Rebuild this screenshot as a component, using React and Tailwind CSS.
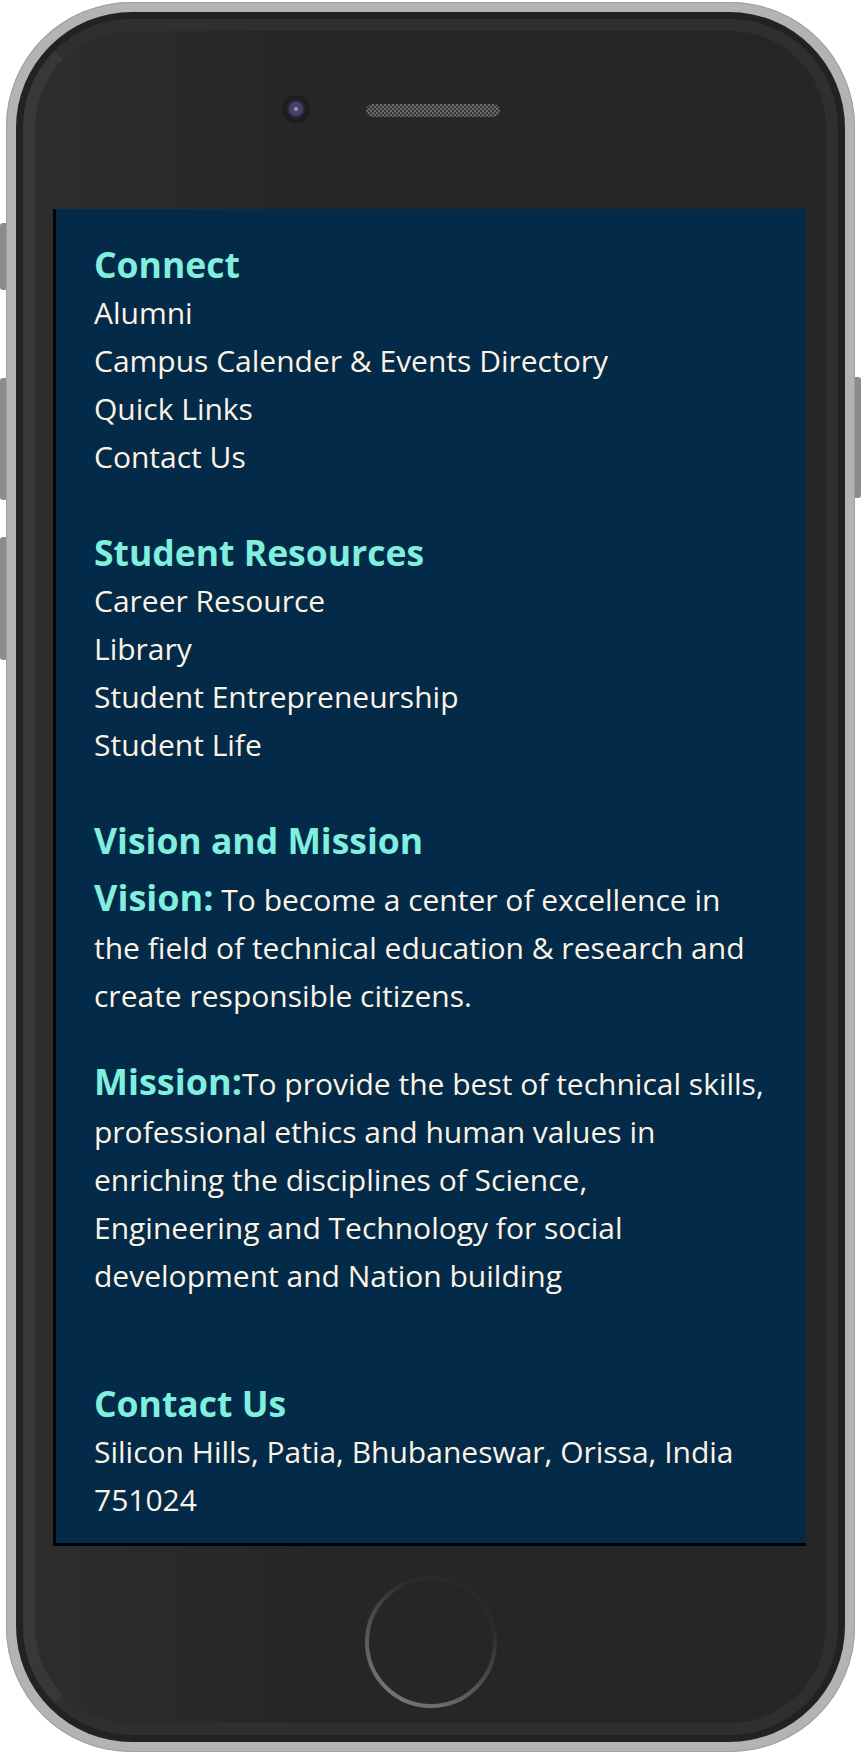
import { useId } from 'react'

const connectLinks = ['Alumni', 'Campus Calender & Events Directory', 'Quick Links', 'Contact Us']
const studentLinks = ['Career Resource', 'Library', 'Student Entrepreneurship', 'Student Life']

function LinkSection({ title, links, className = '' }) {
  return (
    <div className={className}>
      <h3 className="text-[35.5px] leading-[50px] font-bold text-[#81efde]">{title}</h3>
      <ul>
        {links.map((l) => (
          <li key={l} className="leading-[48px]">{l}</li>
        ))}
      </ul>
    </div>
  )
}

function HomeButton() {
  const id = useId()
  return (
    <svg width="136" height="136" viewBox="0 0 136 136">
      <defs>
        <linearGradient id={id} x1="0.95" y1="0" x2="0.4" y2="1">
          <stop offset="0" stopColor="#262626" />
          <stop offset="0.3" stopColor="#2c2c2c" />
          <stop offset="0.6" stopColor="#4a4a4a" />
          <stop offset="1" stopColor="#727272" />
        </linearGradient>
      </defs>
      <circle cx="68" cy="68" r="64" fill="none" stroke={`url(#${id})`} strokeWidth="4" />
    </svg>
  )
}

export default function App() {
  return (
    <div className="relative w-[862px] h-[1754px] bg-white font-['Open_Sans',sans-serif]">
      {/* side buttons */}
      <div className="absolute left-0 top-[223px] w-[7px] h-[67px] rounded-l-[3px] bg-[#8b8b90]" />
      <div className="absolute left-0 top-[378px] w-[7px] h-[122px] rounded-l-[3px] bg-[#8b8b90]" />
      <div className="absolute left-0 top-[537px] w-[7px] h-[123px] rounded-l-[3px] bg-[#8b8b90]" />
      <div className="absolute left-[854px] top-[377px] w-[7px] h-[121px] rounded-r-[3px] bg-[#8b8b90]" />

      <div className="relative ml-[6px] pt-[2px] w-[849px]">
        <div className="h-[1750px] rounded-[125px] bg-[#b3b3b3] p-[10px] shadow-[inset_0_0_0_1px_#a0a0a0]">
          <div className="h-full rounded-[116px] bg-[#222222] p-[7px]">
            <div className="h-full rounded-[108px] border-[12px] border-[#2f2f2f] border-l-[#383838] bg-linear-to-r from-[#2d2d2d] via-[#262626] via-35% to-[#262626] flex flex-col">
              {/* top bezel */}
              <div className="h-[178px] flex items-start pl-[247px] pt-[64px] gap-[56px]">
                <div className="w-[28px] h-[28px] rounded-full bg-[#1d1d1f] flex items-center justify-center">
                  <div className="w-[18px] h-[18px] rounded-full bg-[#4a4068] border-[2px] border-[#2e2a40] flex items-center justify-center">
                    <div className="w-[4px] h-[4px] rounded-full bg-[#9d97b8]" />
                  </div>
                </div>
                <div className="mt-[9px] w-[134px] h-[13px] rounded-full bg-[repeating-conic-gradient(#7a7a7a_0_25%,#3a3a3a_0_50%)] bg-[length:4px_4px] opacity-80" />
              </div>

              {/* screen */}
              <div className="ml-[18px] w-[753px] h-[1337px] bg-[#032a49] border-l-[3px] border-b-[3px] border-black pl-[38px] pr-[16px] pt-[30px] text-[30px] text-[#fdf3e3]">
                <LinkSection title="Connect" links={connectLinks} />
                <LinkSection title="Student Resources" links={studentLinks} className="mt-[46px]" />

                <div className="mt-[46px]">
                  <h3 className="text-[35.5px] leading-[50px] font-bold text-[#81efde]">Vision and Mission</h3>
                  <p className="mt-[9px] leading-[48px]">
                    <span className="text-[36px] font-bold text-[#81efde]">Vision:</span> To become a center of excellence in<br />
                    the field of technical education &amp; research and<br />
                    create responsible citizens.
                  </p>
                  <p className="mt-[38px] leading-[48px]">
                    <span className="text-[36px] font-bold text-[#81efde]">Mission:</span>To provide the best of technical skills,<br />
                    professional ethics and human values in<br />
                    enriching the disciplines of Science,<br />
                    Engineering and Technology for social<br />
                    development and Nation building
                  </p>
                </div>

                <div className="mt-[78px]">
                  <h3 className="text-[35.5px] leading-[50px] font-bold text-[#81efde]">Contact Us</h3>
                  <p className="leading-[48px]">Silicon Hills, Patia, Bhubaneswar, Orissa, India<br />751024</p>
                </div>
              </div>

              {/* bottom bezel */}
              <div className="flex-1 flex justify-center pt-[28px]">
                <HomeButton />
              </div>
            </div>
          </div>
        </div>
      </div>
    </div>
  )
}
